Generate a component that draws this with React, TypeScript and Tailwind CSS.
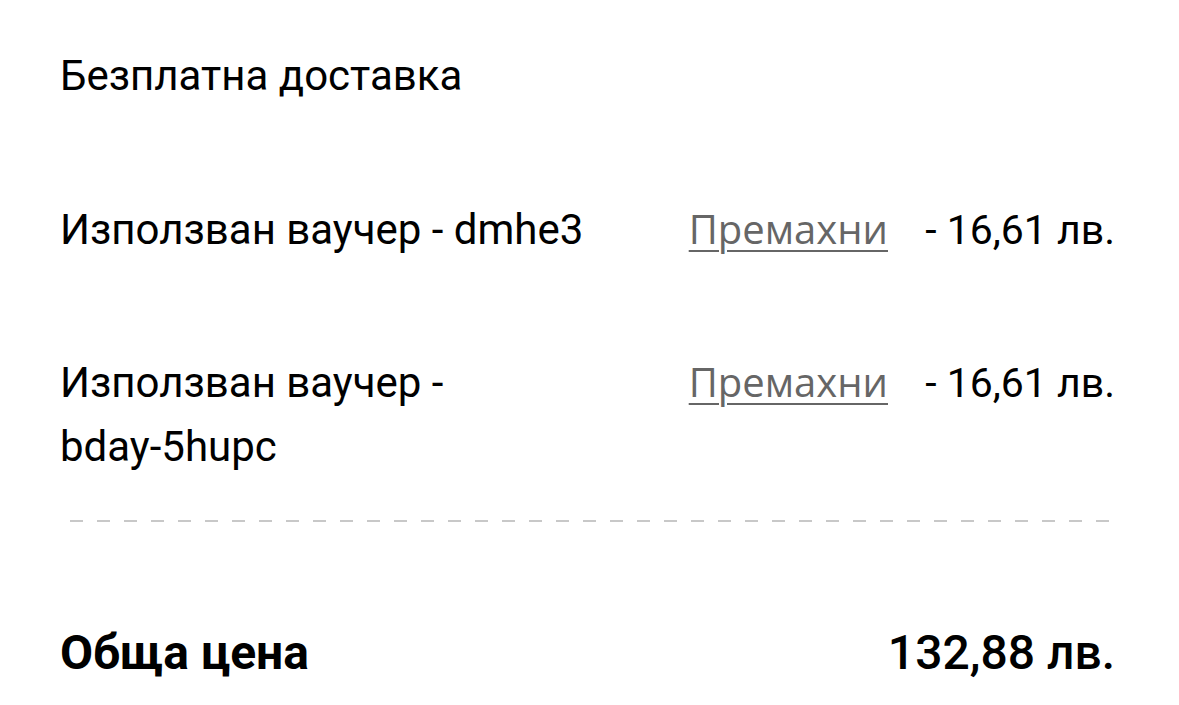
import React from "react";

const roboto = { fontFamily: "Roboto, 'Noto Sans', sans-serif" };

function VoucherRow({ code, className }: { code: string; className: string }) {
  return (
    <div className={`flex items-baseline text-[42px] leading-[64px] ${className}`}>
      <div className="w-[580px] shrink-0">
        Използван ваучер - <span className="whitespace-nowrap">{code}</span>
      </div>
      <div className="ml-auto font-['Open_Sans'] text-[40px] text-[#666666] underline underline-offset-[6px] decoration-2">
        Премахни
      </div>
      <div className="w-[227px] shrink-0 text-right text-[41px]">- 16,61 лв.</div>
    </div>
  );
}

export default function App() {
  return (
    <div className="w-[1179px] h-[705px] bg-white text-black overflow-hidden" style={roboto}>
      <div className="pl-[60px] pr-[64px]">
        <div className="pt-[51px] text-[42px] leading-[50px]">Безплатна доставка</div>
        <VoucherRow code="dmhe3" className="mt-[96px]" />
        <VoucherRow code="bday-5hupc" className="mt-[88px]" />
        <div className="mt-[41px] ml-[10px] mr-[5px] h-[2px] bg-[repeating-linear-gradient(to_right,#c8c8c8_0px,#c8c8c8_13px,transparent_13px,transparent_27px)]" />
        <div className="mt-[101px] flex items-baseline text-[48px] leading-[60px]">
          <div className="font-bold">Обща цена</div>
          <div className="ml-auto font-medium">132,88 лв.</div>
        </div>
      </div>
    </div>
  );
}
